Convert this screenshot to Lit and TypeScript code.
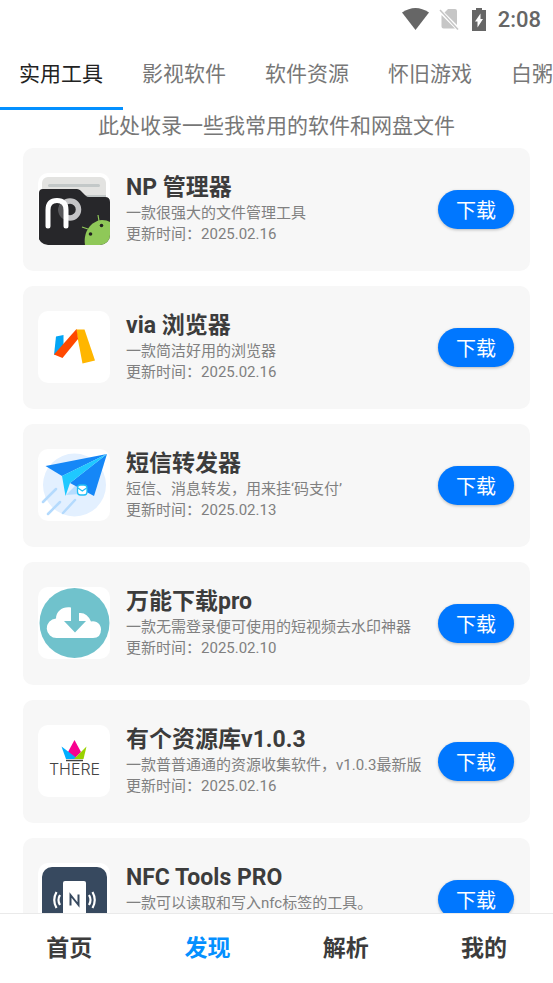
import { LitElement, html, svg, css } from "lit";
import { customElement, property, state } from "lit/decorators.js";
import { classMap } from "lit/directives/class-map.js";

interface AppEntry {
  icon: string;
  name: string;
  summary: string;
  date: string;
}

const entries: AppEntry[] = [
  { icon: "np", name: "NP 管理器", summary: "一款很强大的文件管理工具", date: "2025.02.16" },
  { icon: "via", name: "via 浏览器", summary: "一款简洁好用的浏览器", date: "2025.02.16" },
  { icon: "sms", name: "短信转发器", summary: "短信、消息转发，用来挂‘码支付’", date: "2025.02.13" },
  { icon: "cloud", name: "万能下载pro", summary: "一款无需登录便可使用的短视频去水印神器", date: "2025.02.10" },
  { icon: "there", name: "有个资源库v1.0.3", summary: "一款普普通通的资源收集软件，v1.0.3最新版", date: "2025.02.16" },
  { icon: "nfc", name: "NFC Tools PRO", summary: "一款可以读取和写入nfc标签的工具。", date: "2025.02.16" },
];

const tabs = ["实用工具", "影视软件", "软件资源", "怀旧游戏", "白粥专区"];
const pages = ["首页", "发现", "解析", "我的"];

// Every app icon is drawn on a 72 x 72 tile.
const icons: Record<string, unknown> = {
  np: svg`
    <rect x="4" y="4" width="64" height="40" rx="6" fill="#e3e3e1"/>
    <rect x="10" y="11" width="52" height="3" rx="1.500" fill="#c3c8c8"/>
    <path d="M44 22h24v3H46z" fill="#c3c8c8"/>
    <path d="M5 16h34q2 0 3.500 1.500l5 5q1.500 1.500 3.500 1.500h16q5 0 5 5v38q0 5-5 5H6q-5 0-5-5V20q0-4 4-4z" fill="#27272a"/>
    <circle cx="32" cy="36.500" r="8.500" fill="none" stroke="#c4c4c6" stroke-width="5.500"/>
    <path d="M20 37a12 12 0 0 1 7-10v20a12 12 0 0 1-7-10z" fill="#57575a"/>
    <path d="M10 53V37q0-9.500 9-9.500t9 9.500v16" fill="none" stroke="#fff" stroke-width="5" stroke-linecap="round"/>
    <path d="M47 72c-2-12 5-24 17-25q5 0 8 2v18q0 5-5 5z" fill="#8fc858"/>
    <path d="M61 48l-1-6M50 56l-6-2" stroke="#8fc858" stroke-width="1.200"/>
    <circle cx="52.500" cy="61" r="1.800" fill="#222"/><circle cx="63.500" cy="52.500" r="1.800" fill="#222"/>`,
  via: svg`
    <path d="M18 25.500l7.500-1.500v14l-9.500 6z" fill="#03a5f5"/>
    <path d="M38 18.500h8.500l10.500 31-12.500 3z" fill="#ffb600"/>
    <path d="M38.500 18l1.500 10L24.500 47 16 43.500z" fill="#ff4800"/>`,
  sms: svg`
    <circle cx="36.500" cy="36" r="31.500" fill="#e3f0ff"/>
    <path d="M18 40L5 53M22 53L10 65M37 51L25 64" stroke="#b4dafd" stroke-width="2.500" stroke-linecap="round"/>
    <path d="M28 46l10-10 4 9z" fill="#b5ddff"/>
    <path d="M7.500 17L69 5 24 27z" fill="#1587f7"/>
    <path d="M69 5L56 47 32 34z" fill="#1587f7"/>
    <path d="M69 5L24 27l3.500 20L32 34z" fill="#1fc8ff"/>
    <rect x="39.500" y="36" width="9.500" height="10" rx="3" fill="#fff" stroke="#20bff7" stroke-width="1.300"/>
    <path d="M40 39l4.300 3 4.300-3" fill="none" stroke="#20bff7" stroke-width="1.200"/>`,
  cloud: svg`
    <circle cx="36.500" cy="36" r="35" fill="#70c2cc"/>
    <path d="M19 51a9.500 9.500 0 0 1-1-19.500C18 24 25 19 33 20.500V34h-7l11 11.500L48 34h-7v-8q8-1 12 8.500a8 8 0 0 1 10 8q0 8.500-8 8.500z" fill="#fff"/>`,
  there: svg`
    <path d="M36.500 15L43 27l-6.500 6.500L30 27z" fill="#f8008f"/>
    <path d="M23.500 21.500L40 34H28z" fill="#00aeff"/>
    <path d="M48.500 21.500L45.500 34H36z" fill="#99d100"/>
    <path d="M28 35.500h17" stroke="#444" stroke-width="1.500"/>
    <text class="wordmark" x="36.500" y="50" text-anchor="middle">THERE</text>`,
  nfc: svg`
    <rect x="4" y="4" width="65" height="65" rx="10" fill="#37495f"/>
    <rect x="25" y="18" width="23" height="38" rx="2" fill="#fff"/>
    <path d="M32.500 42.500V32l8 10V31.500" fill="none" stroke="#37495f" stroke-width="2"/>
    <path d="M22 32q-3 5 0 10M18.500 29q-4.500 8 0 16M51 32q3 5 0 10M54.500 29q4.500 8 0 16" fill="none" stroke="#fff" stroke-width="2.200"/>`,
};

@customElement("app-card")
class AppCard extends LitElement {
  @property({ attribute: false }) entry!: AppEntry;

  static styles = css`
    :host { display: block; }
    .card {
      display: flex;
      align-items: center;
      padding: 25px 16px 26px 15px;
      border-radius: 10px;
      background: #f7f7f7;
    }
    .icon {
      flex: none;
      width: 72px;
      height: 72px;
      border-radius: 10px;
      background: #fff;
    }
    .wordmark { font: 300 16px Inter, sans-serif; fill: #444; }
    .info {
      flex: 1;
      min-width: 0;
      margin-left: 16px;
      white-space: nowrap;
    }
    .name { margin: 0; font-size: 23px; line-height: 30px; font-weight: 700; color: #3c3c3c; }
    .line { margin: 0; font-size: 15px; line-height: 21px; color: #808080; }
    .download {
      flex: none;
      width: 76px;
      height: 39px;
      padding: 0;
      border: 0;
      border-radius: 20px;
      background: #0077ff;
      color: #fff;
      font: inherit;
      font-size: 20px;
      box-shadow: 0 1px 3px rgba(0, 0, 0, 0.25);
    }
  `;

  render() {
    const { icon, name, summary, date } = this.entry;
    return html`
      <article class="card">
        <svg class="icon" viewBox="0 0 72 72" aria-hidden="true">${icons[icon]}</svg>
        <div class="info">
          <h2 class="name">${name}</h2>
          <p class="line">${summary}</p>
          <p class="line">更新时间：${date}</p>
        </div>
        <button class="download" type="button">下载</button>
      </article>
    `;
  }
}

@customElement("app-root")
class AppRoot extends LitElement {
  @state() private tab = 0;
  @state() private page = 1;

  static styles = css`
    :host {
      display: flex;
      flex-direction: column;
      height: 100vh;
      background: #fff;
      font-family: Roboto, "Noto Sans CJK SC", sans-serif;
    }
    .status {
      flex: none;
      display: flex;
      justify-content: flex-end;
      align-items: center;
      height: 38px;
      padding-right: 12px;
      color: #666;
      font-size: 22px;
      font-weight: 500;
    }
    .status svg { display: block; }
    .wifi { margin-right: 10px; }
    .sim { margin-right: 13px; }
    .battery { margin-right: 12px; }
    .tabs {
      flex: none;
      display: flex;
      height: 72px;
      overflow: hidden;
    }
    .tab {
      flex: none;
      width: 123px;
      padding: 0 1px 2px 0;
      border: 0;
      border-bottom: 3px solid transparent;
      background: none;
      color: #777;
      font: inherit;
      font-size: 21px;
    }
    .tab.current { border-color: #0490ff; color: #222; }
    .content {
      flex: 1;
      min-height: 0;
      overflow-y: auto;
      scrollbar-width: none;
    }
    .intro {
      margin: 0;
      padding-bottom: 6px;
      text-align: center;
      font-size: 21px;
      line-height: 32px;
      color: #777;
    }
    .list {
      display: flex;
      flex-direction: column;
      gap: 15px;
      padding: 0 23px 15px;
    }
    .nav {
      flex: none;
      display: flex;
      height: 69px;
      border-top: 1px solid #eaeaea;
    }
    .link {
      flex: 1;
      text-align: center;
      line-height: 70px;
      font-size: 23px;
      font-weight: 700;
      color: #3c3c3c;
      text-decoration: none;
    }
    .link.current { color: #0490ff; }
  `;

  private openPage(event: Event, index: number) {
    event.preventDefault();
    this.page = index;
  }

  render() {
    return html`
      <header class="status">
        <svg class="wifi" width="27" height="22" viewBox="0 0 27 22" aria-hidden="true">
          <path d="M0 4.500Q13.500-4.500 27 4.500L13.500 22z" fill="#666"/>
        </svg>
        <svg class="sim" width="20" height="22" viewBox="0 0 20 22" aria-hidden="true">
          <path d="M9 1h7q2 0 2 2v14L5.500 4.500zM2.500 7L16 20.500H4.500q-2 0-2-2z" fill="#c6c6c6"/>
          <path d="M1 2l18 19.500" stroke="#c6c6c6" stroke-width="1.500"/>
        </svg>
        <svg class="battery" width="14" height="23" viewBox="0 0 14 23" aria-hidden="true">
          <path d="M4 0h6v2h4v21H0V2h4z" fill="#666"/>
          <path d="M8.500 5.500v5.500H11l-5.500 8.500V13.500H3z" fill="#fff"/>
        </svg>
        <span>2:08</span>
      </header>
      <div class="tabs" role="tablist">
        ${tabs.map((label, i) => html`
          <button
            class=${classMap({ tab: true, current: i === this.tab })}
            type="button"
            role="tab"
            aria-selected=${i === this.tab}
            @click=${() => (this.tab = i)}
          >${label}</button>
        `)}
      </div>
      <main class="content">
        <p class="intro">此处收录一些我常用的软件和网盘文件</p>
        <div class="list">
          ${entries.map((entry) => html`<app-card .entry=${entry}></app-card>`)}
        </div>
      </main>
      <nav class="nav">
        ${pages.map((label, i) => html`
          <a
            class=${classMap({ link: true, current: i === this.page })}
            href="#"
            @click=${(e: Event) => this.openPage(e, i)}
          >${label}</a>
        `)}
      </nav>
    `;
  }
}
